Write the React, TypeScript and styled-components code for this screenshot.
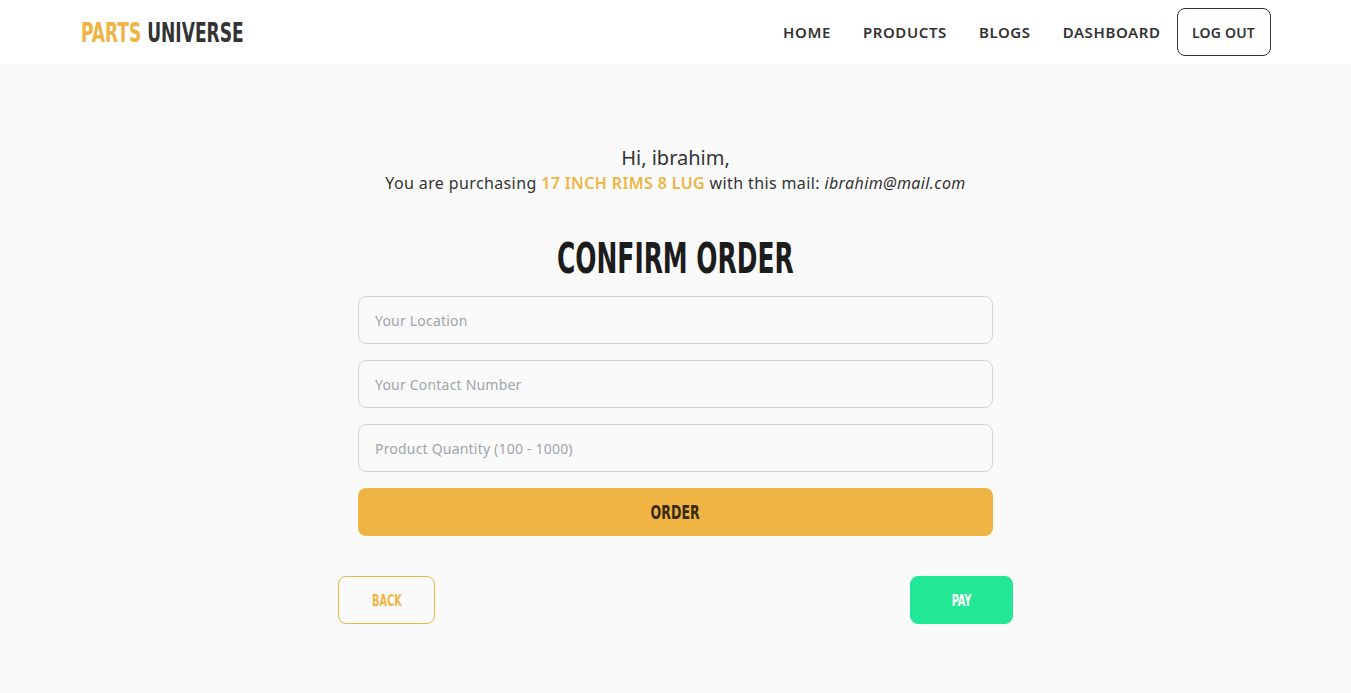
import React from "react";
import styled, { createGlobalStyle } from "styled-components";

const GlobalStyle = createGlobalStyle`
  html, body { margin: 0; padding: 0; }
  body {
    background: #fafafa;
    font-family: "Noto Sans", "Open Sans", sans-serif;
    color: #333;
  }
  * { box-sizing: border-box; }
`;

const BODY = `"Noto Sans", "Open Sans", sans-serif`;
const ORANGE = "#efb443";

/* Narrow display face (stand-in for a condensed headline font) */
const Narrow = styled.span<{ $origin?: string; $scale?: number }>`
  display: inline-block;
  font-family: "DejaVu Sans", sans-serif;
  font-stretch: condensed;
  font-weight: 700;
  transform: scaleX(${(p) => p.$scale ?? 0.68});
  transform-origin: ${(p) => p.$origin || "center"};
  white-space: nowrap;
`;

const Header = styled.header`
  background: #fff;
  height: 64px;
`;

const HeaderInner = styled.div`
  width: 1190px;
  margin: 0 auto;
  height: 100%;
  display: flex;
  align-items: center;
  justify-content: space-between;
`;

const Logo = styled.div`
  font-size: 26px;
  color: #333;
  line-height: 30px;
`;

const LogoAccent = styled.span`
  color: ${ORANGE};
`;

const Nav = styled.nav`
  display: flex;
  align-items: center;
`;

const NavLink = styled.a`
  font-family: ${BODY};
  font-weight: 600;
  font-size: 15px;
  letter-spacing: 0.6px;
  color: #333;
  text-decoration: none;
  padding: 0 16px;
  &:first-child { padding-left: 0; }
`;

const LogoutButton = styled.button`
  font-family: ${BODY};
  font-weight: 600;
  font-size: 14px;
  letter-spacing: 0.2px;
  color: #333;
  background: #fff;
  border: 1px solid #333;
  border-radius: 8px;
  width: 94px;
  height: 48px;
`;

const Main = styled.main`
  display: flex;
  flex-direction: column;
  align-items: center;
  padding-top: 80px;
`;

const Greeting = styled.div`
  font-family: ${BODY};
  font-size: 20px;
  color: #333;
  line-height: 28px;
  text-align: center;
`;

const Intro = styled.div`
  font-family: ${BODY};
  font-size: 16px;
  letter-spacing: 0.38px;
  color: #333;
  line-height: 22px;
  text-align: center;
`;

const Product = styled.b`
  color: ${ORANGE};
  font-weight: 600;
`;

const Mail = styled.i``;

const Title = styled.h1`
  font-size: 42px;
  color: #1c1c1c;
  margin: 43px 0 17px;
  line-height: 40px;
  text-align: center;
`;

const Form = styled.form`
  width: 635px;
  display: flex;
  flex-direction: column;
  gap: 16px;
`;

const Input = styled.input`
  height: 48px;
  width: 100%;
  border: 1px solid #d4d4d4;
  border-radius: 8px;
  background: #fafafa;
  padding: 0 16px;
  font-family: ${BODY};
  font-size: 14px;
  letter-spacing: 0.2px;
  color: #333;
  outline: none;
  &::placeholder { color: #a0a4ad; }
`;

const OrderButton = styled.button`
  height: 48px;
  width: 100%;
  border: none;
  border-radius: 8px;
  background: ${ORANGE};
  font-size: 20px;
  color: #3a2a05;
  padding: 0;
`;

const ActionRow = styled.div`
  width: 675px;
  margin-top: 40px;
  display: flex;
  justify-content: space-between;
`;

const ActionButton = styled.button<{ $variant: "outline" | "solid" }>`
  height: 48px;
  width: ${(p) => (p.$variant === "outline" ? "97px" : "103px")};
  border-radius: 8px;
  font-size: 16px;
  padding: 0;
  border: 1px solid ${(p) => (p.$variant === "outline" ? ORANGE : "#22e795")};
  background: ${(p) => (p.$variant === "outline" ? "transparent" : "#22e795")};
  color: ${(p) => (p.$variant === "outline" ? ORANGE : "#fff")};
`;

export default function App() {
  return (
    <>
      <GlobalStyle />
      <Header>
        <HeaderInner>
          <Logo>
            <Narrow $origin="left" $scale={0.73}>
              <LogoAccent>PARTS</LogoAccent> UNIVERSE
            </Narrow>
          </Logo>
          <Nav>
            <NavLink href="#">HOME</NavLink>
            <NavLink href="#">PRODUCTS</NavLink>
            <NavLink href="#">BLOGS</NavLink>
            <NavLink href="#">DASHBOARD</NavLink>
            <LogoutButton>LOG OUT</LogoutButton>
          </Nav>
        </HeaderInner>
      </Header>
      <Main>
        <Greeting>Hi, ibrahim,</Greeting>
        <Intro>
          You are purchasing <Product>17 INCH RIMS 8 LUG</Product> with this mail: <Mail>ibrahim@mail.com</Mail>
        </Intro>
        <Title>
          <Narrow $scale={0.66}>CONFIRM ORDER</Narrow>
        </Title>
        <Form onSubmit={(e) => e.preventDefault()}>
          <Input placeholder="Your Location" />
          <Input placeholder="Your Contact Number" />
          <Input placeholder="Product Quantity (100 - 1000)" />
          <OrderButton type="submit">
            <Narrow $scale={0.7}>ORDER</Narrow>
          </OrderButton>
        </Form>
        <ActionRow>
          <ActionButton $variant="outline">
            <Narrow>BACK</Narrow>
          </ActionButton>
          <ActionButton $variant="solid">
            <Narrow>PAY</Narrow>
          </ActionButton>
        </ActionRow>
      </Main>
    </>
  );
}
